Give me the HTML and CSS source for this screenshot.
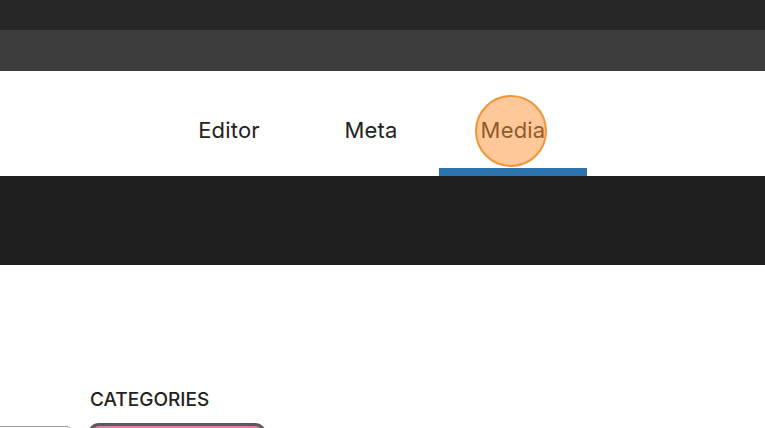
FILE: index.html
```html
<!DOCTYPE html>
<html lang="en">
<head>
    <meta charset="UTF-8">
    <meta name="viewport" content="width=device-width, initial-scale=1.0">
    <title>Post Editor</title>
    <link rel="stylesheet" href="styles.css">
</head>
<body>

<div class="status-bar"></div>
<div class="toolbar"></div>

<nav class="tabs">
    <div class="tab">Editor</div>
    <div class="tab">Meta</div>
    <div class="tab active">
        Media
        <span class="tap-marker"></span>
    </div>
</nav>

<div class="banner"></div>

<section class="categories">
    <h2 class="section-title">Categories</h2>
    <div class="chip-row">
        <div class="chip"></div>
        <div class="chip selected"></div>
    </div>
</section>

</body>
</html>
```

FILE: styles.css
```css
body {
    margin: 0;
    font-family: Inter, "Noto Sans", sans-serif;
    color: #222;
    background: #fff;
    overflow: hidden;
    height: 428px;
}

.status-bar {
    height: 30px;
    background-color: #272727;
}

.toolbar {
    height: 41px;
    background-color: #3d3d3d;
}

.tabs {
    display: flex;
    height: 105px;
    padding-left: 158px;
}

.tab {
    position: relative;
    width: 142px;
    display: flex;
    align-items: center;
    justify-content: center;
    padding-top: 13px;
    box-sizing: border-box;
    font-size: 22px;
    letter-spacing: 0.2px;
    color: #222;
}

.tab.active::after {
    content: "";
    position: absolute;
    left: -3px;
    right: -3px;
    bottom: 0;
    height: 8px;
    background-color: #2a74ab;
}

/* touch indicator over the active tab */
.tap-marker {
    position: absolute;
    left: 33px;
    top: 24px;
    width: 68px;
    height: 68px;
    border-radius: 50%;
    border: 2px solid #f2943a;
    background-color: rgba(255, 145, 49, 0.5);
}

.banner {
    height: 89px;
    background-color: #1f1f1f;
}

.categories {
    padding-top: 124px;
}

.section-title {
    margin: 0 0 12px 90px;
    font-size: 19px;
    font-weight: 500;
    text-transform: uppercase;
    line-height: 22px;
}

.chip-row {
    display: flex;
    gap: 16px;
    margin-left: -16px;
}

.chip {
    width: 88px;
    height: 40px;
    margin-top: 3px;
    border: 1px solid #9a9a9a;
    border-radius: 5px;
    box-sizing: border-box;
}

.chip.selected {
    width: 178px;
    margin-top: 0;
    border: 3px solid #5a5a5a;
    border-radius: 11px;
    background-color: #de7fa5;
}
```
